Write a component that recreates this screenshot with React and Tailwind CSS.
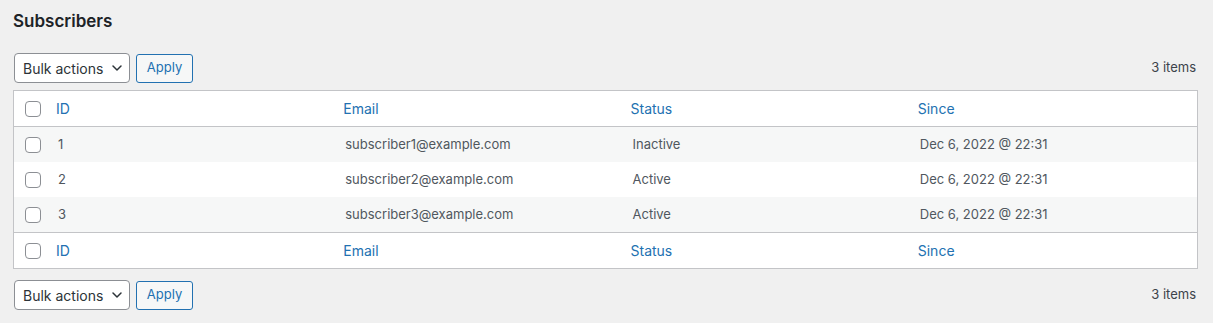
import React from "react";

const rows = [
  { id: 1, email: "subscriber1@example.com", status: "Inactive", since: "Dec 6, 2022 @ 22:31" },
  { id: 2, email: "subscriber2@example.com", status: "Active", since: "Dec 6, 2022 @ 22:31" },
  { id: 3, email: "subscriber3@example.com", status: "Active", since: "Dec 6, 2022 @ 22:31" },
];

function Checkbox() {
  return <span className="block w-4 h-4 rounded-[4px] border border-[#8c8f94] bg-white" />;
}

function Toolbar() {
  return (
    <div className="flex items-center justify-between h-[30px]">
      <div className="flex items-center gap-[6px]">
        <div className="ml-px flex items-center justify-between w-[116px] h-[30px] rounded-[4px] border border-[#8c8f94] bg-white pl-[8px] pr-[6px] text-[14px] text-[#2c3338]">
          <span>Bulk actions</span>
          <svg width="12" height="12" viewBox="0 0 12 12" fill="none">
            <path d="M2 4l4 4 4-4" stroke="#2c3338" strokeWidth="1.5" strokeLinecap="round" strokeLinejoin="round" />
          </svg>
        </div>
        <div className="flex items-center justify-center w-[57px] h-[29px] rounded-[3px] border border-[#2271b1] bg-[#f6f7f7] text-[13px] text-[#2271b1]">
          Apply
        </div>
      </div>
      <div className="pr-[2px] text-[13px] text-[#3c434a]">3 items</div>
    </div>
  );
}

function HeadRow({ top }) {
  return (
    <div className={`grid grid-cols-[34px_1fr_1fr_1fr_1fr] items-center h-[36px] bg-white border-[#c3c4c7] ${top ? "border-b" : "border-t"} text-[14px] text-[#2271b1]`}>
      <div className="pl-[11px]"><Checkbox /></div>
      <div className="pl-[8px]">ID</div>
      <div className="pl-[8px]">Email</div>
      <div className="pl-[8px]">Status</div>
      <div className="pl-[8px]">Since</div>
    </div>
  );
}

export default function App() {
  return (
    <div className="w-[1213px] h-[323px] bg-[#f0f0f0] px-[13px] pt-[10px] overflow-hidden" style={{ fontFamily: "Inter, 'Noto Sans', sans-serif" }}>
      <h2 className="text-[17px] leading-[23px] font-semibold text-[#1d2327]">Subscribers</h2>
      <div className="mt-[20px] w-[1185px]">
        <Toolbar />
      </div>
      <div className="mt-[7px] w-[1185px] border border-[#c3c4c7] bg-white">
        <HeadRow top />
        {rows.map((r, i) => (
          <div key={r.id} className={`grid grid-cols-[34px_1fr_1fr_1fr_1fr] items-center h-[35px] text-[13px] text-[#50575e] ${i % 2 === 0 ? "bg-[#f6f7f7]" : "bg-white"}`}>
            <div className="pl-[11px]"><Checkbox /></div>
            <div className="pl-[10px]">{r.id}</div>
            <div className="pl-[10px]">{r.email}</div>
            <div className="pl-[10px]">{r.status}</div>
            <div className="pl-[10px]">{r.since}</div>
          </div>
        ))}
        <HeadRow />
      </div>
      <div className="mt-[11px] w-[1185px]">
        <Toolbar />
      </div>
    </div>
  );
}
